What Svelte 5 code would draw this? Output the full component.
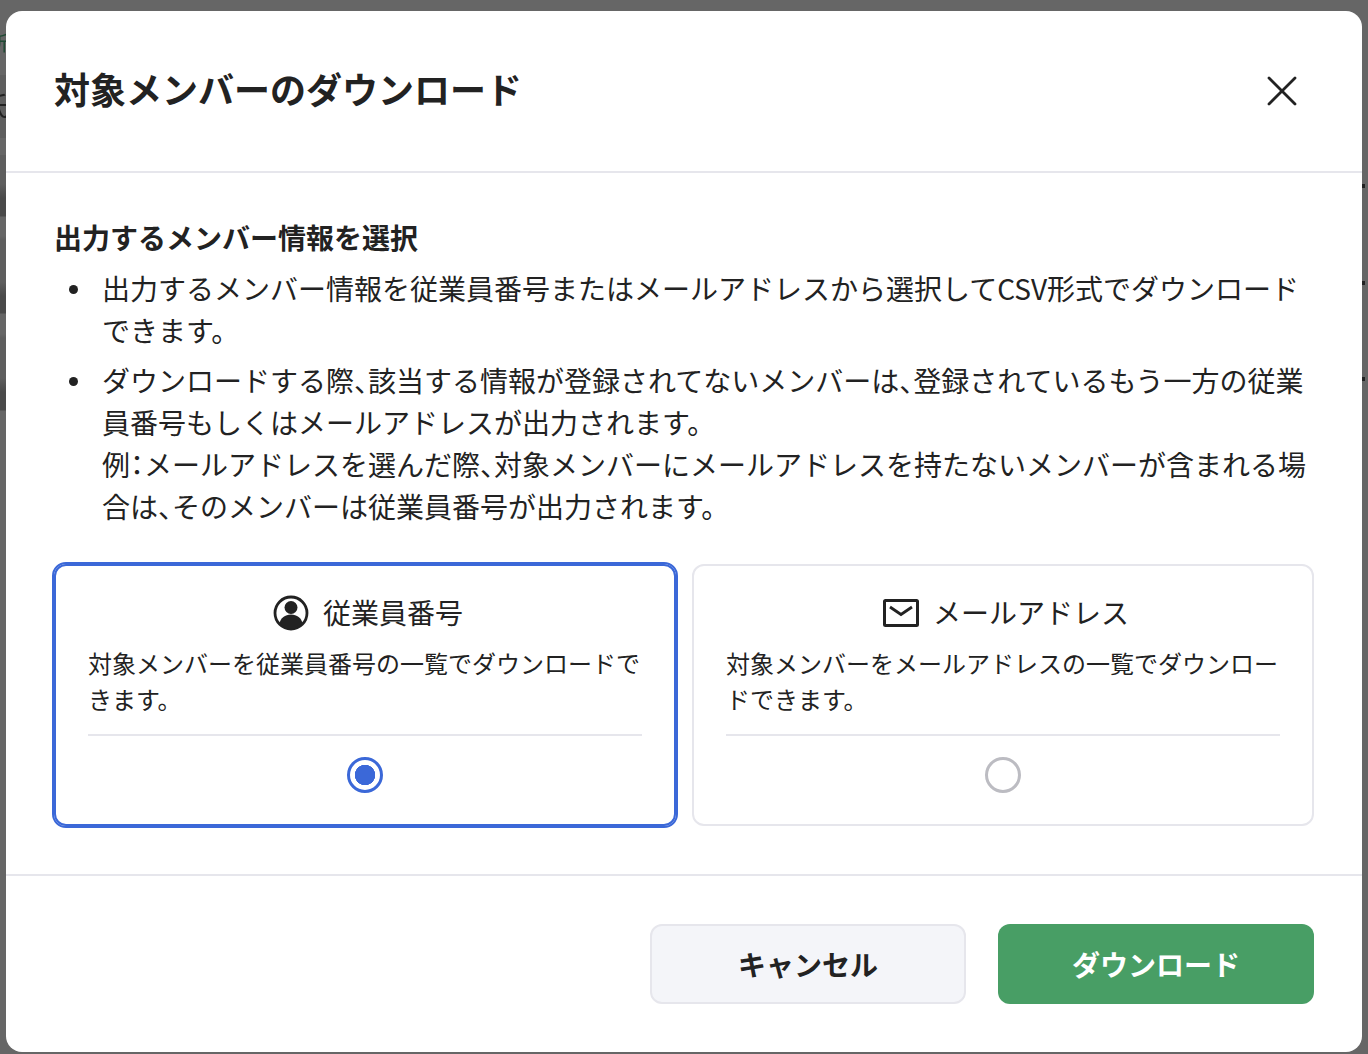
<script lang="ts">
  const options = [
    { id: 'employee', label: '従業員番号', desc: '対象メンバーを従業員番号の一覧でダウンロードできます。', icon: 'person' },
    { id: 'email', label: 'メールアドレス', desc: '対象メンバーをメールアドレスの一覧でダウンロードできます。', icon: 'mail' }
  ];

  let selected = $state('employee');
</script>

<div class="page">
  <!-- page behind the dialog, only its edges show -->
  <div class="behind" aria-hidden="true">
    <span class="peek green">新</span>
    <span class="peek name">氏</span>
    <span class="dot d1"></span>
    <span class="dot d2"></span>
    <span class="dot d3"></span>
  </div>

  <div class="modal" role="dialog" aria-label="対象メンバーのダウンロード">
    <header class="head">
      <h1>対象メンバーのダウンロード</h1>
      <button type="button" class="close" aria-label="閉じる">
        <svg width="32" height="32" viewBox="0 0 32 32" fill="none" stroke="#222" stroke-width="2.8" stroke-linecap="round">
          <path d="M3 3l26 26M29 3L3 29" />
        </svg>
      </button>
    </header>

    <div class="body">
      <h2>出力するメンバー情報を選択</h2>
      <ul>
        <li>出力するメンバー情報を従業員番号またはメールアドレスから選択してCSV形式でダウンロードできます。</li>
        <li>
          ダウンロードする際<span class="half">、</span>該当する情報が登録されてないメンバーは<span class="half">、</span>登録されているもう一方の従業員番号もしくはメールアドレスが出力されます。<br />
          例<span class="half">：</span>メールアドレスを選んだ際<span class="half">、</span>対象メンバーにメールアドレスを持たないメンバーが含まれる場合は<span class="half">、</span>そのメンバーは従業員番号が出力されます。
        </li>
      </ul>

      <div class="cards">
        {#each options as opt (opt.id)}
          <label class="card" class:on={selected === opt.id}>
            <span class="title">
              {#if opt.icon === 'person'}
                <svg width="36" height="36" viewBox="0 0 36 36">
                  <circle cx="18" cy="18" r="16" fill="none" stroke="#222" stroke-width="2.8" />
                  <circle cx="18" cy="12.5" r="6.5" fill="#222" />
                  <path d="M6.500 28.500c1-5.500 5.500-9 11.500-9s10.500 3.500 11.500 9c-3 3-7 5-11.500 5s-8.500-2-11.500-5z" fill="#222" />
                </svg>
              {:else}
                <svg width="36" height="28" viewBox="0 0 36 28" fill="none" stroke="#222">
                  <rect x="1.500" y="1.500" width="33" height="25" rx="1" stroke-width="3" />
                  <path d="M7 8l11 7.500L29 8" stroke-width="2.800" />
                </svg>
              {/if}
              {opt.label}
            </span>
            <span class="desc">{opt.desc}</span>
            <span class="pick">
              <input type="radio" name="kind" value={opt.id} bind:group={selected} />
              <span class="radio"></span>
            </span>
          </label>
        {/each}
      </div>
    </div>

    <footer class="foot">
      <button type="button" class="btn cancel">キャンセル</button>
      <button type="button" class="btn primary">ダウンロード</button>
    </footer>
  </div>
</div>

<style>
  :global(body) {
    margin: 0;
    background: #666;
    overflow: hidden;
  }
  .page {
    position: relative;
    overflow: hidden;
    box-sizing: border-box;
    height: 1054px;
    padding: 11px 6px 2px;
    background: #666;
    font-family: "Noto Sans CJK JP", "Noto Sans", sans-serif;
    color: #222;
  }
  .behind {
    position: absolute;
    inset: 0;
    background:
      linear-gradient(to bottom,
        #666 0 75px, #5e5e5e 75px 138px, #666 138px 155px, #5e5e5e 155px 184px,
        #4a4a4a 198px 216px, #666 217px 236px, #5e5e5e 240px 282px,
        #4a4a4a 296px 313px, #666 314px 334px, #5e5e5e 338px 378px,
        #4a4a4a 392px 410px, #666 411px) left / 6px 100% no-repeat;
  }
  .peek {
    position: absolute;
    line-height: 1;
    filter: blur(0.4px);
  }
  .green {
    left: -12px;
    top: 33px;
    font-size: 20px;
    color: #1f4a33;
  }
  .name {
    left: -17px;
    top: 92px;
    font-size: 26px;
    color: #222;
  }
  .dot {
    position: absolute;
    right: 3px;
    width: 3px;
    height: 4px;
    background: #222;
  }
  .d1 { top: 184px; }
  .d2 { top: 281px; }
  .d3 { top: 377px; }
  .modal {
    position: relative;
    height: 100%;
    background: #fff;
    border-radius: 16px;
    display: flex;
    flex-direction: column;
  }
  .head {
    height: 162px;
    box-sizing: border-box;
    padding: 0 64px 6px 48px;
    display: flex;
    align-items: center;
    justify-content: space-between;
    border-bottom: 2px solid #e6e6ec;
  }
  h1 {
    margin: 0;
    font-size: 36px;
    line-height: 1.5;
    font-weight: 700;
  }
  .close {
    border: 0;
    background: none;
    padding: 0;
    margin-top: 6px;
    display: flex;
  }
  .body {
    flex: 1;
    padding: 43px 48px 48px;
  }
  h2 {
    margin: 0;
    font-size: 28px;
    line-height: 42px;
    font-weight: 700;
  }
  ul {
    margin: 9px 0 0;
    padding: 0 0 0 48px;
    font-size: 28px;
    line-height: 42px;
    list-style: none;
  }
  li {
    position: relative;
  }
  li::before {
    content: '';
    position: absolute;
    left: -33px;
    top: 18px;
    width: 9px;
    height: 9px;
    border-radius: 50%;
    background: #222;
  }
  li + li {
    margin-top: 8px;
  }
  .half {
    font-feature-settings: "halt";
  }
  .cards {
    margin-top: 37px;
    display: grid;
    grid-template-columns: 1fr 1fr;
    gap: 16px;
  }
  .card {
    box-sizing: border-box;
    height: 262px;
    border: 2px solid #e6e6ec;
    border-radius: 12px;
    padding: 24px 32px 10px;
    display: flex;
    flex-direction: column;
  }
  .card.on {
    border-color: #3b68d8;
    outline: 2px solid #3b68d8;
  }
  .title {
    display: flex;
    align-items: center;
    justify-content: center;
    gap: 14px;
    height: 44px;
    padding-left: 6px;
    font-size: 28px;
  }
  .title svg {
    margin-top: 2px;
  }
  .desc {
    margin-top: 11px;
    font-size: 24px;
    line-height: 36px;
    padding-bottom: 17px;
    border-bottom: 2px solid #e6e6ec;
  }
  .pick {
    flex: 1;
    position: relative;
    display: flex;
    align-items: center;
    justify-content: center;
  }
  .pick input {
    position: absolute;
    opacity: 0;
    margin: 0;
  }
  .radio {
    box-sizing: border-box;
    width: 36px;
    height: 36px;
    border-radius: 50%;
    border: 3px solid #bcbcc2;
    background: #fff;
  }
  .on .radio {
    border-color: #3b68d8;
    background: radial-gradient(circle, #3b68d8 10px, #fff 10.500px);
  }
  .foot {
    height: 178px;
    box-sizing: border-box;
    border-top: 2px solid #e6e6ec;
    padding: 48px 48px 0;
    display: flex;
    justify-content: flex-end;
    gap: 32px;
  }
  .btn {
    box-sizing: border-box;
    width: 316px;
    height: 80px;
    border-radius: 12px;
    font-family: inherit;
    font-size: 28px;
    font-weight: 700;
  }
  .cancel {
    background: #f4f5f9;
    border: 2px solid #e6e6ec;
    color: #222;
  }
  .primary {
    background: #489e65;
    border: 0;
    color: #fff;
  }
</style>
